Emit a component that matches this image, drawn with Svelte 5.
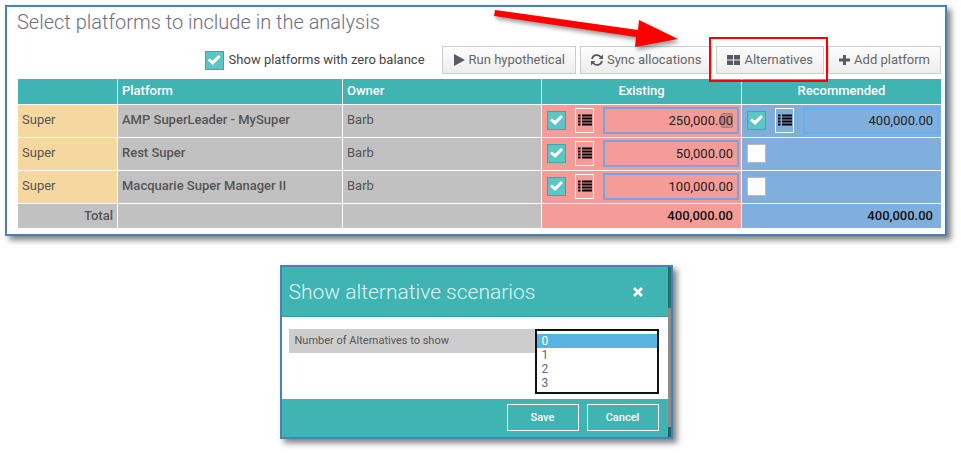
<script>
	let platforms = $state([
		{ type: 'Super', name: 'AMP SuperLeader - MySuper', owner: 'Barb', existing: { on: true, amount: '250,000.00', pointer: true }, recommended: { on: true, amount: '400,000.00' } },
		{ type: 'Super', name: 'Rest Super', owner: 'Barb', existing: { on: true, amount: '50,000.00' }, recommended: { on: false } },
		{ type: 'Super', name: 'Macquarie Super Manager II', owner: 'Barb', existing: { on: true, amount: '100,000.00' }, recommended: { on: false } }
	]);

	let showZero = $state(true);
	let alternatives = $state(0);
</script>

{#snippet allocation(side, label)}
	<div class="allocation">
		<input class="check" type="checkbox" bind:checked={side.on} aria-label="Include {label}" />
		{#if side.amount}
			<button class="list-btn" aria-label="Details for {label}">
				<svg width="14" height="12" viewBox="0 0 14 12" fill="currentColor">
					<path d="M0 .5h2.500v2H0zM0 3.500h2.500v2H0zM0 6.500h2.500v2H0zM0 9.500h2.500v2H0zM4 .5h10v2H4zM4 3.500h10v2H4zM4 6.500h10v2H4zM4 9.500h10v2H4z" />
				</svg>
			</button>
			<div class="amount-box">
				<input class="amount" type="text" bind:value={side.amount} aria-label="Amount for {label}" />
				{#if side.pointer}<span class="text-pointer"></span>{/if}
			</div>
		{/if}
	</div>
{/snippet}

<main>
	<section class="panel">
		<h1>Select platforms to include in the analysis</h1>

		<div class="toolbar">
			<label class="zero">
				<input class="check" type="checkbox" bind:checked={showZero} />
				Show platforms with zero balance
			</label>
			<button class="tool">
				<svg width="12" height="12" viewBox="0 0 12 12" fill="currentColor"><path d="M1 0l11 6-11 6z" /></svg>
				Run hypothetical
			</button>
			<button class="tool">
				<svg width="12" height="12" viewBox="0 0 12 12" fill="none" stroke="currentColor" stroke-width="1.800">
					<path d="M1 5a5 5 0 0 1 8.800-2M11 7a5 5 0 0 1-8.800 2" />
					<path d="M12 .5V5H7.500zM0 11.500V7h4.500z" fill="currentColor" stroke="none" />
				</svg>
				Sync allocations
			</button>
			<span class="spot">
				<button class="tool">
					<svg width="13" height="12" viewBox="0 0 13 12" fill="currentColor"><path d="M0 1h6v4.500H0zM7 1h6v4.500H7zM0 6.500h6V11H0zM7 6.500h6V11H7z" /></svg>
					Alternatives
				</button>
			</span>
			<button class="tool">
				<svg width="11" height="12" viewBox="0 0 11 12" fill="currentColor"><path d="M4 1h3v3.500h4v3H7V11H4V7.500H0v-3h4z" /></svg>
				Add platform
			</button>
		</div>

		<table>
			<colgroup>
				<col class="c-type" /><col class="c-name" /><col class="c-owner" /><col class="c-amount" /><col class="c-amount" />
			</colgroup>
			<thead>
				<tr><th></th><th>Platform</th><th>Owner</th><th class="center">Existing</th><th class="center">Recommended</th></tr>
			</thead>
			<tbody>
				{#each platforms as p}
					<tr>
						<td class="type">{p.type}</td>
						<td class="name">{p.name}</td>
						<td>{p.owner}</td>
						<td class="existing side">{@render allocation(p.existing, p.name + ' existing')}</td>
						<td class="recommended side">{@render allocation(p.recommended, p.name + ' recommended')}</td>
					</tr>
				{/each}
			</tbody>
			<tfoot>
				<tr>
					<td class="total">Total</td><td></td><td></td>
					<td class="existing sum">400,000.00</td>
					<td class="recommended sum">400,000.00</td>
				</tr>
			</tfoot>
		</table>

		<svg class="arrow" width="190" height="46" viewBox="0 0 190 46">
			<path d="M1 1L144 21 145 11 184 30 141 38 142 28 0 7z" fill="#f00" />
		</svg>
	</section>

	<section class="modal" role="dialog" aria-labelledby="modal-title">
		<div class="modal-main">
			<header>
				<h2 id="modal-title">Show alternative scenarios</h2>
				<button class="close" aria-label="Close">
					<svg width="10" height="10" viewBox="0 0 10 10" stroke="currentColor" stroke-width="2.800"><path d="M1 1l8 8M9 1l-8 8" /></svg>
				</button>
			</header>
			<div class="modal-body">
				<label for="alternatives">Number of Alternatives to show</label>
				<select id="alternatives" size="4" bind:value={alternatives}>
					{#each [0, 1, 2, 3] as n}
						<option value={n} class:chosen={n === alternatives}>{n}</option>
					{/each}
				</select>
			</div>
			<footer>
				<button>Save</button>
				<button>Cancel</button>
			</footer>
		</div>
		<div class="behind"></div>
	</section>
</main>

<style>
	:global(body) { background: #fff; }

	main {
		padding: 5px 14px 12px 5px;
		font-family: Roboto, "Liberation Sans", sans-serif;
		font-size: 13px; line-height: 16px; color: #555;
	}
	main * { box-sizing: border-box; }
	button, input, select { font: inherit; color: inherit; margin: 0; }
	svg { display: block; flex-shrink: 0; }

	.panel {
		position: relative;
		padding: 3px 3px 5px 10px;
		border: 2px solid #4a80b4;
		box-shadow: 4px 4px 6px rgba(0, 0, 0, 0.5);
	}
	h1 { margin: 0; font-size: 20px; line-height: 24px; font-weight: 300; color: #6e6e82; }

	.toolbar { display: flex; justify-content: flex-end; align-items: center; gap: 4px; padding: 12px 1px 4px 0; }
	.zero { display: flex; align-items: center; gap: 5px; margin-right: 13px; color: #444; }
	.tool {
		height: 28px; padding: 0 10px;
		display: flex; align-items: center; gap: 4px;
		border: 1px solid #ccc; background: linear-gradient(#fdfdfd, #ededed);
		color: #666; white-space: nowrap;
	}
	.tool svg { color: #555b62; }
	.spot { position: relative; }
	.spot::after { content: ''; position: absolute; inset: -9px -4px -8px -7px; border: 2px solid #f00; z-index: 1; pointer-events: none; }

	.check {
		appearance: none; width: 19px; height: 19px; flex-shrink: 0;
		display: grid; place-items: center;
		border: 1px solid #bbb; background: #fff;
	}
	.check:checked { border-color: #3aa9a6; background: #5bc6c3; }
	.check:checked::before {
		content: ''; width: 13px; height: 10px; background: #fff;
		clip-path: polygon(0 54%, 15% 34%, 38% 58%, 84% 0, 100% 20%, 40% 100%);
	}

	table { width: 100%; border-collapse: collapse; table-layout: fixed; }
	.c-type { width: 100px; }
	.c-name { width: 225px; }
	.c-owner { width: 199px; }
	.c-amount { width: 200px; }
	th, td { height: 25px; padding: 0 4px; border: 1px solid #fff; text-align: left; }
	th { height: 26px; padding-bottom: 2px; background: #3fb4b3; color: #fff; font-weight: 500; }
	td { background: #c1c1c1; }
	tbody td { height: 33px; padding-bottom: 2px; }
	.center { text-align: center; }
	.type { background: #f5d7a0; }
	.name { font-weight: 500; }
	.existing { background: #f59b98; }
	.recommended { background: #80aedd; }
	.side { padding-left: 5px; padding-right: 2px; }
	.total { text-align: right; font-weight: 500; }
	.sum { padding-right: 8px; text-align: right; font-weight: 500; color: #111; }

	.allocation { display: flex; align-items: center; gap: 9px; }
	.list-btn {
		width: 19px; height: 25px; padding: 0; flex-shrink: 0;
		display: grid; place-items: center;
		border: 1px solid #fff; background: none; color: #000;
	}
	.amount-box { position: relative; flex: 1; min-width: 0; }
	.amount {
		display: block; width: 100%; height: 27px; padding: 0 4px;
		border: 2px solid #75a5e0; background: none;
		text-align: right; color: #222;
	}
	.recommended .amount { border-color: #66aef2; }
	.text-pointer {
		position: absolute; right: 6px; top: 6px; width: 12px; height: 15px;
		border: 1px solid rgba(90, 90, 90, 0.3); background: rgba(90, 90, 90, 0.3); border-radius: 2px;
		pointer-events: none;
	}

	.arrow { position: absolute; left: 487px; top: 2px; z-index: 2; pointer-events: none; filter: drop-shadow(2px 3px 2px rgba(0, 0, 0, 0.4)); }

	.modal {
		width: 393px; max-width: 100%; margin: 29px auto 0;
		display: flex;
		border: 2px solid #4a80b4;
		box-shadow: 4px 4px 6px rgba(0, 0, 0, 0.5);
	}
	.modal-main { flex: 1; min-width: 0; }
	.behind { width: 3px; background: linear-gradient(#2a6f6e 24%, #8b8b8b 24% 94%, #1e6462 94%); }
	header {
		display: flex; align-items: center; justify-content: space-between;
		height: 50px; padding: 0 25px 0 7px;
		background: #3fb4b3; color: #fff; border-bottom: 1px solid #36a09f;
	}
	h2 { margin: 0; font-size: 21px; line-height: 28px; font-weight: 300; color: #dff5f4; }
	.close { padding: 0; border: 0; background: none; color: #fff; }
	.modal-body { display: flex; align-items: flex-start; padding: 12px 9px 5px 7px; background: #fff; }
	.modal-body label {
		flex: 1; height: 24px; padding: 0 6px;
		font-size: 11px; line-height: 24px; background: #cdcdcd;
	}
	select {
		width: 124px; height: 65px; padding: 3px 0; overflow: hidden;
		border: 2px solid #111; border-radius: 0; background: #fff; outline: none;
		font-size: 12px; color: #667;
	}
	option { min-height: 0; height: 14px; padding: 0 5px; line-height: 14px; }
	.chosen { color: #fff; background: #59b4e3 linear-gradient(#59b4e3, #59b4e3); }
	footer { display: flex; justify-content: flex-end; gap: 8px; padding: 5px 9px 6px; background: #3fb4b3; }
	footer button {
		width: 72px; height: 27px; padding: 0;
		border: 1px solid #fff; background: none;
		font-size: 11px; font-weight: 500; color: #fff;
	}
</style>
